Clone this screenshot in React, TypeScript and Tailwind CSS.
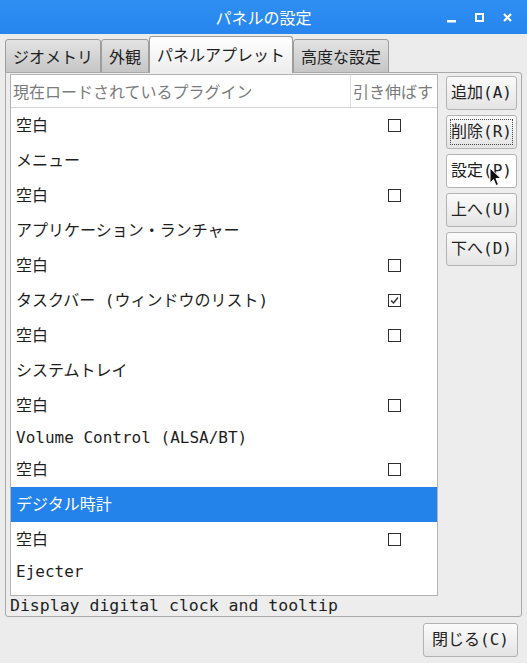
import React from 'react';

const listFont = { fontFamily: '"DejaVu Sans Mono", "Noto Sans CJK JP", monospace' };
const uiFont = { fontFamily: '"Noto Sans CJK JP", "DejaVu Sans", sans-serif' };

type Row = { name: string; check?: 'on' | 'off'; latin?: boolean; selected?: boolean };

const rows: Row[] = [
  { name: '空白', check: 'off' },
  { name: 'メニュー' },
  { name: '空白', check: 'off' },
  { name: 'アプリケーション・ランチャー' },
  { name: '空白', check: 'off' },
  { name: 'タスクバー (ウィンドウのリスト)', check: 'on' },
  { name: '空白', check: 'off' },
  { name: 'システムトレイ' },
  { name: '空白', check: 'off' },
  { name: 'Volume Control (ALSA/BT)', latin: true },
  { name: '空白', check: 'off' },
  { name: 'デジタル時計', selected: true },
  { name: '空白', check: 'off' },
  { name: 'Ejecter', latin: true },
];

const CheckBox = ({ on }: { on: boolean }) => (
  <div className="flex h-[13px] w-[13px] items-center justify-center border border-[#2e2e2e] bg-white">
    {on && (
      <svg width="11" height="11" viewBox="0 0 11 11">
        <path d="M2 5.5 L4.5 8 L9 2.5" fill="none" stroke="#333" strokeWidth="1.4" />
      </svg>
    )}
  </div>
);

const SideButton = ({ label, focus, hover }: { label: string; focus?: boolean; hover?: boolean }) => (
  <button
    className={`relative flex h-[34px] w-[71px] items-center justify-center rounded-[3px] border border-[#b3b3b3] text-[16px] text-[#222] ${
      hover ? 'bg-white' : 'bg-gradient-to-b from-[#fbfbfb] to-[#e4e4e4]'
    }`}
    style={listFont}
  >
    {focus && <span className="absolute inset-[3px] border border-dotted border-[#444]" />}
    <span className="relative whitespace-nowrap">{label}</span>
  </button>
);

const Tab = ({ label, active }: { label: string; active?: boolean }) => (
  <div
    className={`flex items-center rounded-t-[3px] border border-[#9d9d9d] px-[7px] text-[16px] text-[#1e1e1e] ${
      active
        ? 'relative z-10 h-[37px] border-b-0 bg-gradient-to-b from-white to-[#ededed] pb-[2px]'
        : 'h-[34px] bg-gradient-to-b from-[#e3e3e3] to-[#c6c6c6]'
    }`}
    style={uiFont}
  >
    {label}
  </div>
);

export default function App() {
  return (
    <div className="h-[666px] w-[527px] overflow-hidden bg-white">
      <div className="flex h-[663px] flex-col bg-[#ececec]">
        {/* title bar */}
        <div className="relative flex h-[34px] shrink-0 items-center justify-center bg-gradient-to-b from-[#2f8ff2] to-[#2785ee]">
          <span className="text-[16px] text-white" style={uiFont}>
            パネルの設定
          </span>
          <div className="absolute right-[15px] top-[13px] flex items-center gap-[19px]">
            <svg width="9" height="10" viewBox="0 0 9 10">
              <rect x="0" y="7" width="9" height="2.5" fill="white" />
            </svg>
            <svg width="9" height="10" viewBox="0 0 9 10">
              <rect x="1" y="1" width="7" height="7" fill="none" stroke="white" strokeWidth="2" />
            </svg>
            <svg width="9" height="10" viewBox="0 0 9 10">
              <path d="M1 1 L8 8 M8 1 L1 8" stroke="white" strokeWidth="2.2" />
            </svg>
          </div>
        </div>

        {/* tabs */}
        <div className="mt-[2px] flex items-end pl-[5px]">
          <Tab label="ジオメトリ" />
          <Tab label="外観" />
          <Tab label="パネルアプレット" active />
          <Tab label="高度な設定" />
        </div>

        {/* notebook */}
        <div className="mx-[5px] -mt-px flex h-[545px] flex-col rounded-b-[3px] rounded-tr-[3px] border border-[#a9a9a9] bg-[#ededed] px-[4px] pt-[1px]">
          <div className="flex gap-[8px]">
            {/* list */}
            <div className="h-[522px] w-[428px] overflow-hidden border border-[#b4b4b4] bg-white">
              <div className="flex h-[33px] border-b border-[#d3d3d3] text-[16px] text-[#7b7b7b]" style={uiFont}>
                <div className="flex w-[340px] items-center border-r border-[#dcdcdc] pl-[2px]">
                  現在ロードされているプラグイン
                </div>
                <div className="flex flex-1 items-center pl-[2px]">引き伸ばす</div>
              </div>
              {rows.map((r, i) => (
                <div
                  key={i}
                  className={`flex items-center text-[16px] ${r.latin ? 'h-[29px]' : 'h-[35px]'} ${
                    r.selected ? 'bg-[#2383eb] text-white' : 'text-[#1e1e1e]'
                  }`}
                  style={listFont}
                >
                  <div className="w-[341px] whitespace-nowrap pl-[5px]">{r.name}</div>
                  <div className="flex flex-1 justify-center">
                    {r.check && <CheckBox on={r.check === 'on'} />}
                  </div>
                </div>
              ))}
            </div>

            {/* side buttons */}
            <div className="relative flex flex-col gap-[5px] pt-[2px]">
              <SideButton label="追加(A)" />
              <SideButton label="削除(R)" focus />
              <SideButton label="設定(P)" hover />
              <SideButton label="上へ(U)" />
              <SideButton label="下へ(D)" />
              <svg className="absolute left-[43px] top-[93px]" width="13" height="20" viewBox="0 0 13 20">
                <path d="M1 1 L1 16 L4.5 12.5 L7 18.5 L9.5 17.5 L7 11.5 L12 11.5 Z" fill="#111" stroke="white" strokeWidth="1" />
              </svg>
            </div>
          </div>
          <div className="text-[16.5px] leading-[19px] text-[#1e1e1e]" style={listFont}>
            Display digital clock and tooltip
          </div>
        </div>

        {/* footer */}
        <div className="flex justify-end pr-[9px] pt-[6px]">
          <button
            className="flex h-[34px] w-[95px] items-center justify-center rounded-[3px] border border-[#b3b3b3] bg-gradient-to-b from-[#fbfbfb] to-[#e4e4e4] text-[16px] text-[#222]"
            style={listFont}
          >
            閉じる(C)
          </button>
        </div>
      </div>
    </div>
  );
}
